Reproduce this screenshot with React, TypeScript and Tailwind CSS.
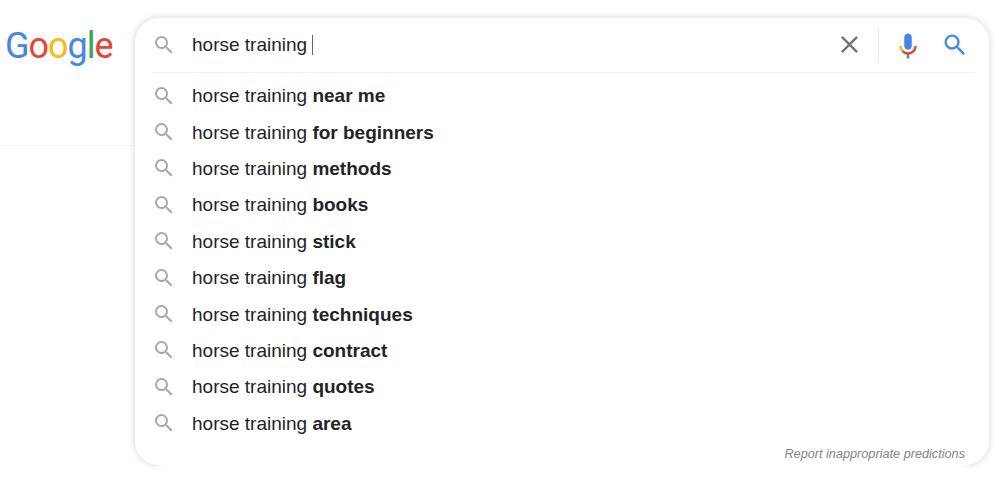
import React from 'react';

const suggestions = ['near me', 'for beginners', 'methods', 'books', 'stick', 'flag', 'techniques', 'contract', 'quotes', 'area'];

const searchPath = 'M15.5 14h-.79l-.28-.27A6.471 6.471 0 0 0 16 9.5 6.5 6.5 0 1 0 9.5 16c1.61 0 3.09-.59 4.23-1.57l.27.28v.79l5 4.99L20.49 19l-4.99-5zm-6 0C7.01 14 5 11.99 5 9.5S7.01 5 9.5 5 14 7.01 14 9.5 11.99 14 9.5 14z';

const SearchIcon = ({ className }: { className: string }) => (
  <svg viewBox="0 0 24 24" className={className} fill="currentColor">
    <path d={searchPath} />
  </svg>
);

const App: React.FC = () => {
  return (
    <div className="w-[999px] h-[479px] bg-white flex overflow-hidden font-['Liberation_Sans',Arial,sans-serif] text-[#222426]">
      {/* Logo column */}
      <div className="w-[135px] h-[146px] shrink-0 border-b border-[#f5f5f5] pt-[21px] pl-[5px]">
        <div className="font-['Roboto',sans-serif] text-[36px] leading-[50px] tracking-[-1px] font-[450]">
          <span className="text-[#4285f4]">G</span>
          <span className="text-[#ea4335]">o</span>
          <span className="text-[#fbbc05]">o</span>
          <span className="text-[#4285f4]">g</span>
          <span className="text-[#34a853]">l</span>
          <span className="text-[#ea4335]">e</span>
        </div>
      </div>

      {/* Search box, the bottom edge of the shadow is washed out in the middle */}
      <div className="relative w-[854px] h-[447px] mt-[18px] bg-white rounded-[24px] shadow-[0_0_7px_rgba(32,33,36,0.2)] after:absolute after:left-[18px] after:right-[16px] after:bottom-[-12px] after:h-[13px] after:bg-[linear-gradient(90deg,transparent,white_12px,white_calc(100%-12px),transparent)]">
        <div className="h-[55px] ml-[17px] mr-[14px] flex items-center border-b border-[#f0f1f2]">
          <SearchIcon className="w-6 h-6 text-[#a5a9ad] -mt-[1px]" />
          <span className="ml-[16px] text-[19px] leading-[24px]">horse training</span>
          <span className="ml-[5px] w-px h-[20px] bg-[#666]" />
          <button className="ml-auto w-[29px] h-[29px] -mt-[1px]">
            <svg viewBox="0 0 24 24" className="w-[29px] h-[29px]" fill="#70757a">
              <path d="M19 6.41L17.59 5 12 10.59 6.41 5 5 6.41 10.59 12 5 17.59 6.41 19 12 13.41 17.59 19 19 17.59 13.41 12z" />
            </svg>
          </button>
          <span className="ml-[14px] w-px h-[33px] bg-[#e8eaec]" />
          <svg viewBox="0 0 24 24" className="ml-[14px] w-[30px] h-[30px] mt-[2px]">
            <path fill="#4285f4" d="m12 15c1.66 0 3-1.31 3-2.97v-7.02c0-1.66-1.34-3.01-3-3.01s-3 1.34-3 3.01v7.02c0 1.66 1.34 2.97 3 2.97z" />
            <path fill="#34a853" d="m11 18.08h2v3.92h-2z" />
            <path fill="#fbbc05" d="m7.05 16.87c-1.27-1.33-2.05-2.83-2.05-4.87h2c0 1.45 0.56 2.42 1.47 3.38v0.32l-1.15 1.18z" />
            <path fill="#ea4335" d="m12 16.93a4.97 5.25 0 0 1 -3.54 -1.55l-1.41 1.49c1.26 1.34 3.02 2.13 4.95 2.13 3.87 0 6.99-2.92 6.99-7h-1.99c0 2.92-2.24 4.93-5 4.93z" />
          </svg>
          <SearchIcon className="ml-[18px] mr-[6px] w-[28px] h-[28px] text-[#4285f4]" />
        </div>

        <ul className="mt-[5px] ml-[17px]">
          {suggestions.map((s) => (
            <li key={s} className="h-[36.4px] flex items-center">
              <SearchIcon className="w-6 h-6 text-[#a5a9ad] -mt-[1px]" />
              <span className="ml-[16px] text-[19px] leading-[24px]">
                horse training <b className="font-bold">{s}</b>
              </span>
            </li>
          ))}
        </ul>

        <div className="mt-[4px] pr-[24px] text-right text-[12.7px] leading-[16px] italic text-[#80868b]">
          Report inappropriate predictions
        </div>
      </div>
    </div>
  );
};

export default App;
